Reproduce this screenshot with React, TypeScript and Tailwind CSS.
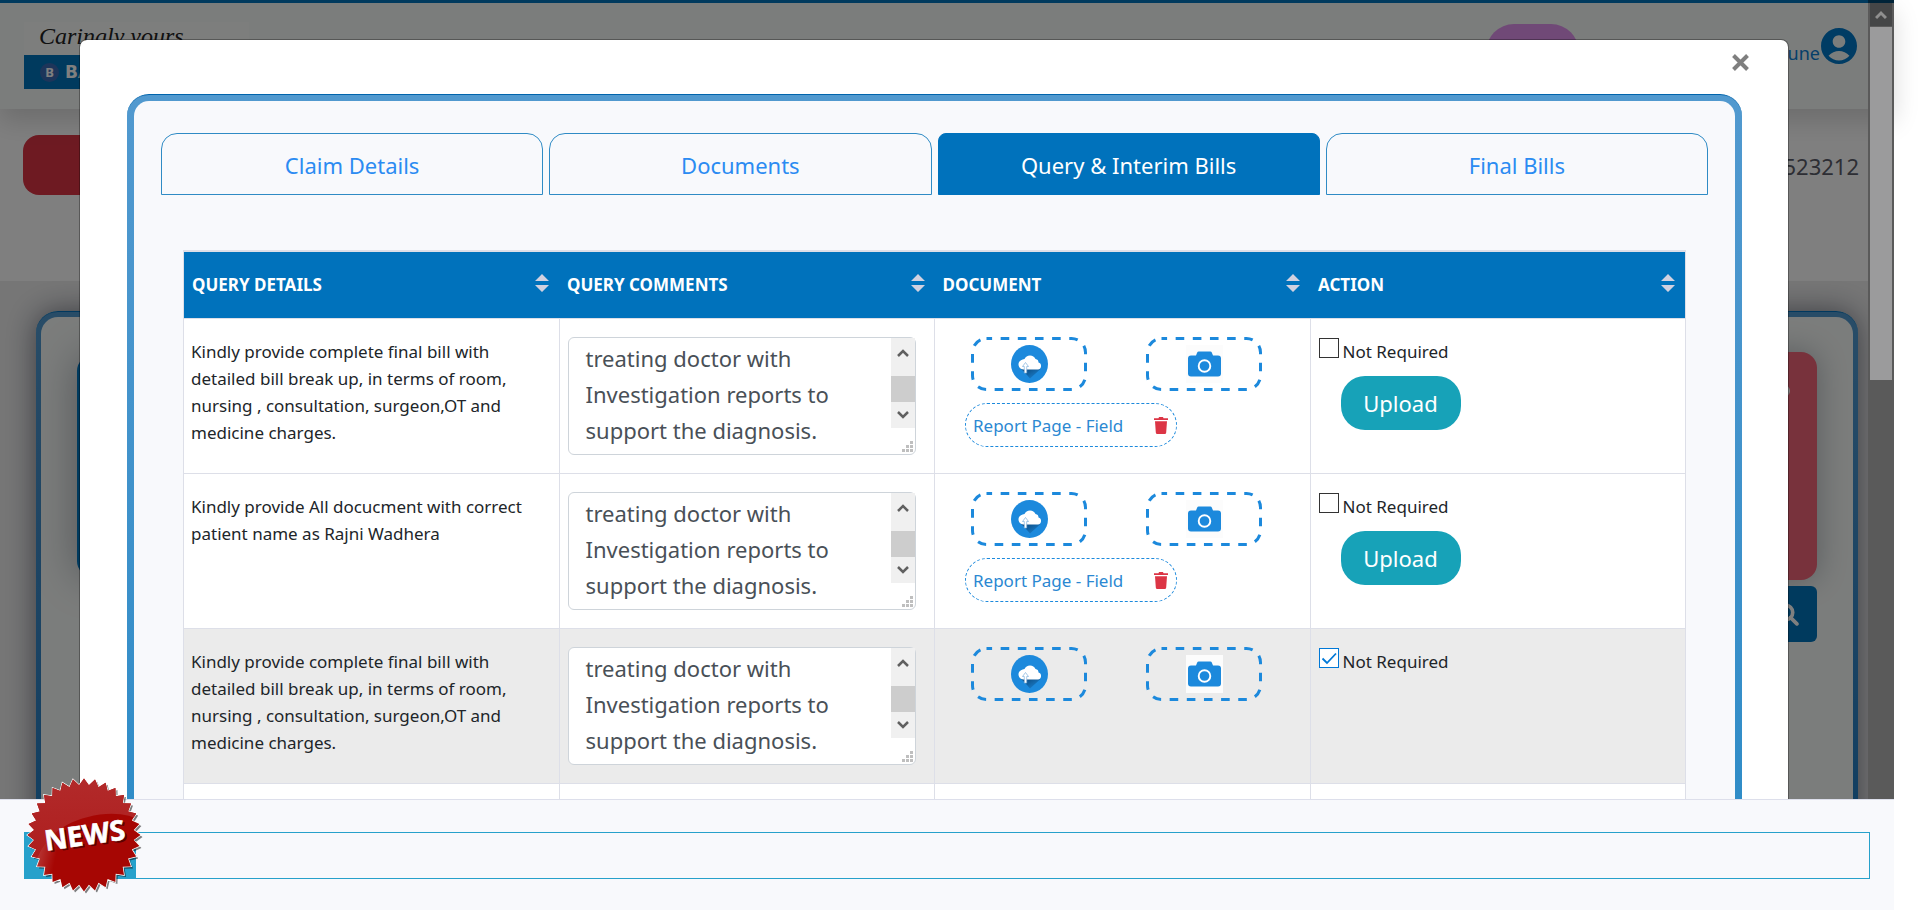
import React from "react";

type Query = { details: string; muted?: boolean; hasFile: boolean };

const BILL_QUERY =
  "Kindly provide complete final bill with detailed bill break up, in terms of room, nursing , consultation, surgeon,OT and medicine charges.";

const QUERIES: Query[] = [
  { details: BILL_QUERY, hasFile: true },
  { details: "Kindly provide All docucment with correct patient name as Rajni Wadhera", hasFile: true },
  { details: BILL_QUERY, muted: true, hasFile: false },
];

const COMMENT = "treating doctor with\nInvestigation reports to\nsupport the diagnosis.";
const TABS = ["Claim Details", "Documents", "Query & Interim Bills", "Final Bills"];
const COLUMNS = ["QUERY DETAILS", "QUERY COMMENTS", "DOCUMENT", "ACTION"];

function burst(cx: number, cy: number, outer: number, inner: number, spikes: number) {
  const points: string[] = [];
  for (let i = 0; i < spikes * 2; i++) {
    const r = i % 2 === 0 ? outer : inner;
    const a = (Math.PI * i) / spikes - Math.PI / 2;
    points.push(`${(cx + r * Math.cos(a)).toFixed(1)},${(cy + r * Math.sin(a)).toFixed(1)}`);
  }
  return points.join(" ");
}

function NewsBadge() {
  const shape = burst(58, 58, 56.5, 50, 32);
  return (
    <svg viewBox="0 0 118 118" className="absolute -top-[56px] left-px size-[118px]" role="img" aria-label="News">
      <defs>
        <clipPath id="burst">
          <polygon points={shape} />
        </clipPath>
        <linearGradient id="gloss" x1="0" y1="0" x2="0" y2="1">
          <stop offset="0" stopColor="#b22a2a" />
          <stop offset="1" stopColor="#ad1c1c" />
        </linearGradient>
        <linearGradient id="shine" x1="0" y1="0.3" x2="1" y2="0.6">
          <stop offset="0" stopColor="#fff" stopOpacity="0.28" />
          <stop offset="0.45" stopColor="#fff" stopOpacity="0" />
        </linearGradient>
      </defs>
      <polygon points={shape} transform="translate(2 2)" fill="#000" fillOpacity="0.5" />
      <polygon points={shape} fill="#fff" stroke="#fff" strokeWidth="1.500" />
      <polygon points={shape} fill="#a60603" />
      <g clipPath="url(#burst)">
        <path d="M0 0H118V50C112 36 84 34 62 40 30 48 14 66 6 96L0 96Z" fill="url(#gloss)" />
        <path d="M6 96C14 66 30 48 62 40L44 118H6Z" fill="url(#shine)" />
      </g>
      <g transform="rotate(-8 60 60)" fontFamily="Noto Sans, sans-serif" fontWeight="700" fontSize="28" textAnchor="middle">
        <text x="61" y="70" fill="#3a0000" fillOpacity="0.7">NEWS</text>
        <text x="59" y="68" fill="#fff" stroke="#fff" strokeWidth="0.6">NEWS</text>
      </g>
    </svg>
  );
}

function SortIcon() {
  return (
    <svg viewBox="0 0 14 18" className="mb-1 h-[18px] w-[14px] shrink-0 fill-[#d1d1e0]" aria-hidden="true">
      <path d="M7 0 14 7H0Z M0 11H14L7 18Z" />
    </svg>
  );
}

function CloudIcon() {
  return (
    <svg viewBox="0 0 37 38" className="h-[38px] w-[37px]" aria-hidden="true">
      <defs>
        <linearGradient id="fold" x1="0" y1="0" x2="1" y2="1">
          <stop offset="0" stopColor="#083a68" />
          <stop offset="1" stopColor="#1c89dc" />
        </linearGradient>
      </defs>
      <ellipse cx="18.5" cy="19" rx="18.5" ry="19" fill="#1c89dc" />
      <path d="M8.500 22 16 30 19 33.500 29.500 24Z" fill="url(#fold)" />
      <path d="M12 24.500a5 5 0 0 1-2-9.300 9 5.500 0 0 1 3.500-1.200A6 6 0 0 1 24.500 14a3.500 3.500 0 0 1 3 3.500 3.600 3.600 0 0 1-.500 7Z" fill="#fff" />
      <path d="M14.500 17.500 17.500 21.500H15.700V28H13.300V21.500H11.500Z" fill="#fff" stroke="#7fb2dc" strokeWidth="0.7" />
    </svg>
  );
}

function CameraIcon() {
  return (
    <svg viewBox="0 0 37 38" className="h-[38px] w-[37px]" aria-hidden="true">
      <rect width="37" height="38" fill="#fcfcfc" />
      <path d="M5 10.500h5l1.200-3q.400-1 1.500-1h11.600q1.100 0 1.500 1l1.200 3h5q3 0 3 3v15q0 3-3 3H5q-3 0-3-3v-15q0-3 3-3Z" fill="#1c89dc" />
      <circle cx="18.500" cy="21" r="5.800" fill="none" stroke="#fff" strokeWidth="1.900" />
    </svg>
  );
}

function PickButton({ label, children }: { label: string; children: React.ReactNode }) {
  return (
    <button type="button" aria-label={label} className="relative flex h-[54px] w-[116px] items-center justify-center">
      <svg className="absolute inset-0 size-full" aria-hidden="true">
        <rect x="1.500" y="1.500" width="113" height="51" rx="14" fill="none" stroke="#1c89dc" strokeWidth="3" strokeDasharray="8.600 8.550" strokeDashoffset="3" />
      </svg>
      {children}
    </button>
  );
}

function CommentBox({ id }: { id: number }) {
  return (
    <div className="relative">
      <textarea
        aria-label={`Query comment ${id}`}
        defaultValue={COMMENT}
        className="block h-[118px] w-full resize-none overflow-hidden rounded-md border border-[#ced4da] bg-white pt-0.5 pr-7 pl-[17px] text-[22px] leading-[36px] text-[#495057] outline-none"
      />
      <div className="absolute top-px right-px flex h-[90px] w-6 flex-col items-center bg-[#f0f0f0]" aria-hidden="true">
        <svg viewBox="0 0 12 10" className="mt-2.5 h-2.5 w-3 fill-none stroke-[#606060] stroke-[2.500]">
          <path d="M1 8 6 3 11 8" />
        </svg>
        <div className="mt-[18px] h-[26px] w-full bg-[#cdcdcd]" />
        <svg viewBox="0 0 12 10" className="mt-2 h-2.5 w-3 fill-none stroke-[#606060] stroke-[2.500]">
          <path d="M1 2 6 7 11 2" />
        </svg>
      </div>
      <svg viewBox="0 0 11 11" className="absolute right-[3px] bottom-[3px] size-[11px] fill-[#bfbfbf]" aria-hidden="true">
        <path d="M8 0h3v3H8ZM4 4h3v3H4ZM8 4h3v3H8ZM0 8h3v3H0ZM4 8h3v3H4ZM8 8h3v3H8Z" />
      </svg>
    </div>
  );
}

function QueryRow({ query, id }: { query: Query; id: number }) {
  const cell = "border border-[#dddfe8] align-top";
  return (
    <tr className={query.muted ? "h-[155px] bg-[#ebebeb]" : "h-[155px] bg-white"}>
      <td className={`${cell} px-[7px] pt-[19px]`}>{query.details}</td>
      <td className={`${cell} pt-[18px] pr-[18px] pl-2`}>
        <CommentBox id={id} />
      </td>
      <td className={`${cell} pt-[18px] pl-[30px]`}>
        <div className="flex gap-[59px] pl-1.5">
          <PickButton label="Upload a file">
            <CloudIcon />
          </PickButton>
          <PickButton label="Take a photo">
            <CameraIcon />
          </PickButton>
        </div>
        {query.hasFile && (
          <div className="mt-3 flex h-11 w-[212px] items-center justify-between rounded-[22px] border border-dashed border-[#1c89dc] pt-0.5 pr-2 pl-[7px]">
            <a href="#report" className="text-[#2b88d2]">Report Page - Field</a>
            <button type="button" aria-label="Delete file">
              <svg viewBox="0 0 14 17" className="h-[17px] w-[14px] fill-[#dc3545]" aria-hidden="true">
                <path d="M0 1.200H4.500L5 0H9L9.500 1.200H14V3H0ZM1 4.200H13L12.200 15.500Q12.100 17 10.700 17H3.300Q1.900 17 1.800 15.500Z" />
              </svg>
            </button>
          </div>
        )}
      </td>
      <td className={`${cell} pt-[19px] pl-2`}>
        <label className="flex items-start gap-1">
          <span className="relative block size-5">
            <input
              type="checkbox"
              defaultChecked={query.muted}
              className="peer block size-5 appearance-none border border-[#333] bg-white checked:border-[#0078d7]"
            />
            <svg viewBox="0 0 20 20" className="pointer-events-none absolute inset-0 hidden size-5 fill-none stroke-[#0078d7] stroke-[1.800] peer-checked:block" aria-hidden="true">
              <path d="M3.500 10.500 8 15 17 5.500" />
            </svg>
          </span>
          Not Required
        </label>
        {query.hasFile && (
          <button type="button" className="mt-[11px] ml-[22px] h-[54px] w-[120px] rounded-3xl bg-[#17a2b8] pt-0.5 text-[22px] text-white">
            Upload
          </button>
        )}
      </td>
    </tr>
  );
}

function Backdrop() {
  return (
    <div className="absolute inset-0 bg-white" aria-hidden="true">
      <header className="relative z-10 flex h-[109px] items-start border-t-3 border-[#0074bc] bg-[#f7faf8] pr-[37px] pl-6 shadow-[0_12px_24px_rgba(0,0,0,0.15)]">
        <div className="mt-[19px] w-[225px]">
          <p className="h-[33px] bg-white/40 pl-[15px] font-['Liberation_Serif',serif] text-[24px] leading-[28px] text-[#222] italic">
            Caringly yours
          </p>
          <div className="flex h-[34px] items-center gap-1.5 bg-[#0074bc] pl-4">
            <span className="flex size-[19px] items-center justify-center rounded-full bg-[#3a6bb5] text-[13px] font-bold text-white">B</span>
            <span className="font-['DejaVu_Sans',sans-serif] text-[17px] font-bold text-white">BAJAJ</span>
          </div>
        </div>
        <div className="mt-[21px] mr-[198px] ml-auto h-14 w-[93px] rounded-[28px] bg-[#e093ee]" />
        <p className="mt-[37px] text-[18px] leading-[27px] text-[#0a7fd4]">Pune</p>
        <svg viewBox="2 2 20 20" className="mt-[25px] ml-px size-9 fill-[#0078c8]">
          <path d="M12 2C6.480 2 2 6.480 2 12s4.480 10 10 10 10-4.480 10-10S17.520 2 12 2zm0 4c1.930 0 3.500 1.570 3.500 3.500S13.930 13 12 13s-3.500-1.570-3.500-3.500S10.070 6 12 6zm0 14c-2.200 0-4.300-.900-5.800-2.600 1.500-1.600 3.700-2.600 5.800-2.600s4.300 1 5.800 2.600C16.300 19.100 14.200 20 12 20z" />
        </svg>
      </header>
      <div className="flex h-[172px] items-start justify-between pt-[26px] pr-[35px] pl-[23px]">
        <div className="h-[60px] w-[150px] rounded-2xl bg-[#dc3545]" />
        <p className="pt-[13px] text-[22px] leading-[36px] text-[#5a5c69]">523212</p>
      </div>
      <div className="bg-[#ededed] pt-[30px] pr-9 pl-9">
        <div className="rounded-[22px] border-t border-[#0071bc] bg-linear-to-b from-[#5199cf] to-[#0071bc] p-[5px] shadow-[0_0_30px_rgba(20,25,45,0.55)]">
          <div className="flex h-[700px] items-start justify-between rounded-[17px] bg-[#f7faf8] pt-[35px] pr-9 pl-9">
            <div className="mt-[3px] h-[222px] w-[300px] rounded-2xl bg-[#0074bc] shadow-[0_0_42px_rgba(20,25,45,0.35)]" />
            <div className="flex flex-col items-end gap-1.5">
              <div className="flex h-[228px] w-[300px] justify-end rounded-2xl bg-[#f06478] pt-[33px] pr-[27px] shadow-[0_0_30px_rgba(20,25,45,0.3)]">
                <span className="size-3 rounded-full bg-white" />
              </div>
              <div className="flex h-14 w-[62px] items-center justify-end rounded-md bg-[#0074bc] pr-[18px]">
                <svg viewBox="0 0 22 22" className="size-[23px] fill-none stroke-white stroke-[3.500]">
                  <circle cx="9" cy="9" r="7" />
                  <path d="M14 14 20 20" strokeLinecap="round" />
                </svg>
              </div>
            </div>
          </div>
        </div>
      </div>
    </div>
  );
}

function PageScrollbar() {
  return (
    <div className="absolute inset-y-0 right-0 z-20 flex w-[26px] flex-col border-t-3 border-[#002338] bg-[#5a5a5a] px-0.5" aria-hidden="true">
      <div className="flex h-[23px] items-center justify-center bg-[#454647]">
        <svg viewBox="0 0 12 10" className="h-2.5 w-3 fill-none stroke-[#8f8f8f] stroke-[3]">
          <path d="M1 8 6 3 11 8" />
        </svg>
      </div>
      <div className="mt-px h-[353px] bg-[#9b9b9c]" />
    </div>
  );
}

export default function App() {
  return (
    <div className="flex h-screen flex-col bg-white pr-[26px] font-['Noto_Sans',sans-serif] text-[17px] leading-[27px] text-[#212529]">
      <div className="relative min-h-0 flex-1 overflow-x-visible overflow-y-clip">
        <Backdrop />
        <div className="absolute inset-0 z-10 bg-black/50" />
        <PageScrollbar />
        <div role="dialog" aria-label="Claim" className="relative z-30 mt-10 mr-[106px] ml-20 rounded-[7px] bg-white pr-[46px] pl-[47px] shadow-[0_0_0_1px_rgba(0,0,0,0.3)]">
          <div className="flex h-[54px] items-start justify-end pt-3">
            <button type="button" aria-label="Close" className="-mr-2 flex size-5 items-center justify-center">
              <svg viewBox="0 0 17 17" className="size-[17px] fill-none stroke-[#7f7f7f] stroke-[4]" aria-hidden="true">
                <path d="M1.500 1.500 15.500 15.500M15.500 1.500 1.500 15.500" />
              </svg>
            </button>
          </div>
          <div className="rounded-[22px] border-t border-[#0064ac] bg-linear-to-b from-[#5199cf] to-[#278ac6] px-[7px] pt-1.5">
            <div className="rounded-t-[15px] bg-[#f8f9fc] px-[27px] pt-8">
              <div role="tablist" className="grid grid-cols-4 gap-1.5">
                {TABS.map((tab) => {
                  const active = tab === "Query & Interim Bills";
                  return (
                    <button
                      key={tab}
                      type="button"
                      role="tab"
                      aria-selected={active}
                      className={
                        active
                          ? "h-[62px] rounded-t-lg border border-[#0072bc] bg-[#0072bc] pt-0.5 text-[22px] text-white"
                          : "h-[62px] rounded-t-2xl border border-[#2f8bc5] pt-0.5 text-[22px] text-[#2b8bf2]"
                      }
                    >
                      {tab}
                    </button>
                  );
                })}
              </div>
              <div className="px-[22px] pt-[55px]">
                <table className="w-full table-fixed border-collapse">
                  <thead>
                    <tr className="h-[67px] border-x border-t-2 border-[#dddfe8] bg-[#0072bc] text-left text-white">
                      {COLUMNS.map((column) => (
                        <th key={column} scope="col" className="pr-2.5 pl-2 font-bold">
                          <span className="flex items-center justify-between">
                            {column}
                            <SortIcon />
                          </span>
                        </th>
                      ))}
                    </tr>
                  </thead>
                  <tbody>
                    {QUERIES.map((query, index) => (
                      <QueryRow key={index} query={query} id={index + 1} />
                    ))}
                    <tr className="h-[155px] bg-white">
                      {COLUMNS.map((column) => (
                        <td key={column} className="border border-[#dddfe8]" />
                      ))}
                    </tr>
                  </tbody>
                </table>
              </div>
            </div>
          </div>
        </div>
      </div>
      <footer className="relative z-40 shrink-0 border-t border-[#dddfeb] bg-[#f8f9fc] px-6 pt-8 pb-[31px]">
        <div className="relative flex h-[47px] border border-[#27a1cb]">
          <div className="w-[111px] bg-[#27a1cb]" />
          <NewsBadge />
        </div>
      </footer>
    </div>
  );
}
